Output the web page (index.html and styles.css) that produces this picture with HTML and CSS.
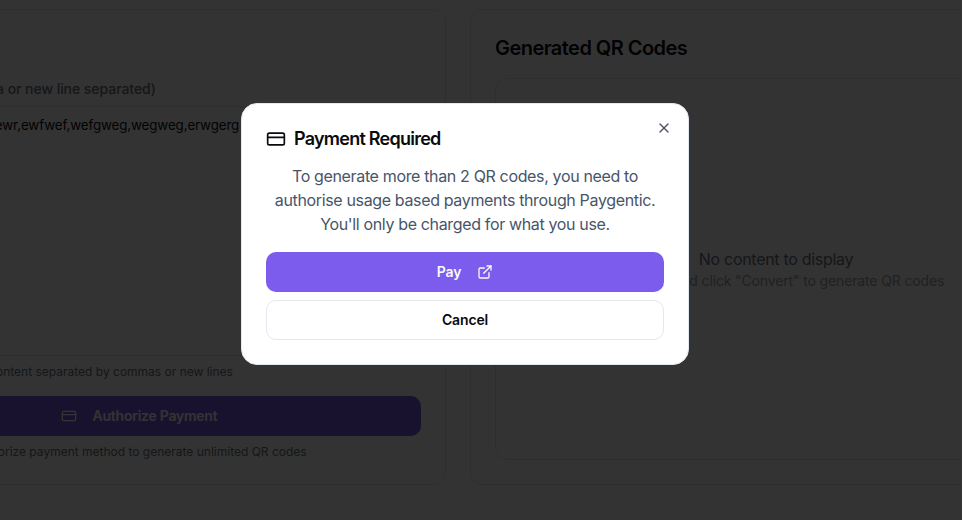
FILE: index.html
```html
<!DOCTYPE html>
<html lang="en">
<head>
<meta charset="utf-8">
<title>Payment Required</title>
<link rel="stylesheet" href="styles.css">
</head>
<body>
<main class="page">
  <section class="card left">
    <label class="label">Enter content (comma or new line separated)</label>
    <div class="textarea">wefgweg,wegweg,eewr,ewfwef,wefgweg,wegweg,erwgerg</div>
    <p class="hint hint-a">Enter text, link or other content separated by commas or new lines</p>
    <button class="auth">
      <svg class="auth-icon" viewBox="0 0 24 24" fill="none" stroke="currentColor" stroke-width="2" stroke-linecap="round" stroke-linejoin="round"><rect x="2" y="5" width="20" height="14" rx="2"/><path d="M2 10h20"/></svg>
      <span class="btn-text">Authorize Payment</span>
    </button>
    <p class="hint hint-b">Authorize payment method to generate unlimited QR codes</p>
  </section>
  <section class="card right">
    <h2 class="title">Generated QR Codes</h2>
    <div class="empty">
      <p class="empty-a">No content to display</p>
      <p class="empty-b">Enter text and click "Convert" to generate QR codes</p>
    </div>
  </section>
</main>
<div class="overlay">
  <div class="modal">
    <button class="close" aria-label="Close">
      <svg viewBox="0 0 24 24" fill="none" stroke="currentColor" stroke-width="2" stroke-linecap="round" stroke-linejoin="round"><path d="M18 6 6 18"/><path d="m6 6 12 12"/></svg>
    </button>
    <h2 class="modal-title">
      <svg class="card-icon" viewBox="0 0 24 24" fill="none" stroke="currentColor" stroke-width="2" stroke-linecap="round" stroke-linejoin="round"><rect x="2" y="5" width="20" height="14" rx="2"/><path d="M2 10h20"/></svg>
      <span>Payment Required</span>
    </h2>
    <p class="modal-text">To generate more than 2 QR codes, you need to authorise usage based payments through Paygentic. You'll only be charged for what you use.</p>
    <button class="btn pay">
      <span class="btn-text">Pay</span>
      <svg class="ext-icon" viewBox="0 0 24 24" fill="none" stroke="currentColor" stroke-width="2" stroke-linecap="round" stroke-linejoin="round"><path d="M15 3h6v6"/><path d="M10 14 21 3"/><path d="M18 13v6a2 2 0 0 1-2 2H5a2 2 0 0 1-2-2V8a2 2 0 0 1 2-2h6"/></svg>
    </button>
    <button class="btn cancel"><span class="btn-text">Cancel</span></button>
  </div>
</div>
</body>
</html>
```
FILE: styles.css
```css
* { box-sizing: border-box; }
html, body { margin: 0; height: 100%; overflow: hidden; }
body { font-family: Inter, "Liberation Sans", sans-serif; background: #fff; color: #0a0a0f; }
button { font-family: inherit; }
p, h2 { margin: 0; }

.page { display: flex; gap: 24px; width: 1400px; height: 520px; margin-left: -168px; padding: 9px 0 35px; }
.card { background: #fff; border: 1px solid #e5e7eb; border-radius: 12px; }
.left { width: 614px; padding: 69px 24px 0; display: flex; flex-direction: column; }
.right { width: 620px; padding: 24px; display: flex; flex-direction: column; }

.label { font-size: 14px; font-weight: 500; line-height: 20px; letter-spacing: -0.05px; color: #6b7280; }
.textarea { height: 250px; margin-top: 7px; border: 1px solid #e5e7eb; padding: 8px 12px; font-size: 13.33px; line-height: 20px; letter-spacing: -0.1px; color: #0a0a0f; white-space: nowrap; overflow: hidden; }
.hint { font-size: 12px; line-height: 16px; color: #6b7280; }
.hint-a { margin-top: 8px; white-space: nowrap; }
.auth { height: 40px; margin-top: 16px; border: 0; border-radius: 10px; background: #7c5cec; color: #fff; font-size: 14px; font-weight: 600; letter-spacing: -0.25px; display: flex; align-items: center; justify-content: center; gap: 16px; }
.auth-icon { width: 16px; height: 16px; }
.hint-b { margin-top: 8px; text-align: center; }

.title { font-size: 20px; font-weight: 600; line-height: 28px; letter-spacing: -0.55px; }
.empty { margin-top: 16px; height: 382px; width: 562px; border: 1px solid #e5e7eb; border-radius: 12px; display: flex; flex-direction: column; align-items: center; justify-content: center; }
.empty-a { font-size: 16px; line-height: 24px; letter-spacing: -0.3px; color: #6b7280; }
.empty-b { font-size: 14px; line-height: 20px; letter-spacing: -0.14px; color: #9ca3af; }

.overlay { position: fixed; inset: 0; background: rgba(0,0,0,.8); display: flex; align-items: flex-start; justify-content: flex-start; padding: 103px 0 0 241px; }
.modal { position: relative; width: 448px; height: 262px; background: #fff; border: 1px solid #e2e8f0; border-radius: 16px; padding: 24px; display: flex; flex-direction: column; }
.close { position: absolute; top: 16px; right: 16px; width: 16px; height: 16px; padding: 0; border: 0; background: none; color: #4b5563; display: flex; }
.close svg { width: 16px; height: 16px; }
.modal-title { display: flex; align-items: center; gap: 8px; margin-top: 1px; font-size: 18px; font-weight: 600; line-height: 20px; letter-spacing: -0.75px; color: #0a0a0f; }
.card-icon { width: 20px; height: 20px; }
.modal-text { margin-top: 15px; font-size: 16px; line-height: 24px; letter-spacing: -0.35px; text-align: center; color: #475569; }
.btn { height: 40px; border-radius: 10px; font-size: 14px; font-weight: 600; letter-spacing: -0.15px; display: flex; align-items: center; justify-content: center; }
.btn-text { margin-bottom: 2px; }
.pay { margin-top: 16px; border: 0; background: #7c5cec; color: #f8fafc; gap: 16px; }
.ext-icon { width: 16px; height: 16px; }
.cancel { margin-top: 8px; background: #fff; border: 1px solid #e2e8f0; color: #0a0a0f; }
```
